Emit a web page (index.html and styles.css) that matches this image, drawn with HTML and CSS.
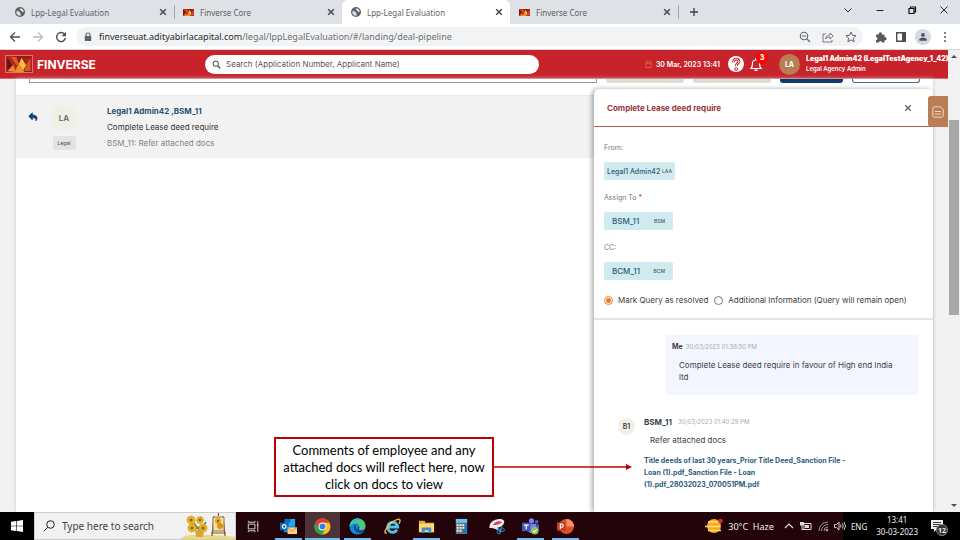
FILE: index.html
```
<!DOCTYPE html>
<html lang="en">
<head>
<meta charset="utf-8">
<title>Lpp-Legal Evaluation</title>
<link rel="stylesheet" href="styles.css">
</head>
<body>
<svg class="defs" aria-hidden="true">
  <symbol id="globe" viewBox="0 0 20 20"><circle cx="10" cy="10" r="10" fill="#5f6368"/><path d="M2.500 9C6 8 10 9 10 12.500c2 0 2 2 1 2.500v2.500C6 18 2 14.500 2.500 9zM11 2.500C9 4 9 5 11 5.500c0 2 1 2 2 2 0 2 2 3 4.500 2.500C17.500 6 15 3 11 2.500z" fill="#dee1e6"/></symbol>
  <symbol id="mosaic" viewBox="0 0 28 18"><path d="M0 0h28v18H0z" fill="#8f1b1b"/><path d="M0 0l9 0 5 9-5 9H0l6-8z" fill="#b3261c"/><path d="M9 18l5-10 6 10zM1 17l7-7 2 8z" fill="#e9902a"/><path d="M14 9l3-7 5 8-3 6z" fill="#f6c33a"/><path d="M5 1l6 0 3 8-3 1z" fill="#e2572b"/><path d="M17 2l10-1-5 9z" fill="#a8201c"/><path d="M22 10l5-8v15l-7 0z" fill="#d9531f"/><path d="M1 2l5 8-5 6z" fill="#5f1515"/></symbol>
  <symbol id="cross" viewBox="0 0 10 10"><path d="M1.500 1.500l7 7m0-7l-7 7" fill="none" stroke="currentColor" stroke-width="1.800"/></symbol>
</svg>

<nav class="tabs" aria-label="Browser tabs">
  <div class="tab"><svg class="fav"><use href="#globe"/></svg><span>Lpp-Legal Evaluation</span><button aria-label="Close tab"><svg><use href="#cross"/></svg></button></div>
  <div class="tab split"><svg class="fav wide"><use href="#mosaic"/></svg><span>Finverse Core</span><button aria-label="Close tab"><svg><use href="#cross"/></svg></button></div>
  <div class="tab active"><svg class="fav"><use href="#globe"/></svg><span>Lpp-Legal Evaluation</span><button aria-label="Close tab"><svg><use href="#cross"/></svg></button></div>
  <div class="tab"><svg class="fav wide"><use href="#mosaic"/></svg><span>Finverse Core</span><button aria-label="Close tab"><svg><use href="#cross"/></svg></button></div>
  <button class="newtab" aria-label="New tab"><svg viewBox="0 0 10 10"><path d="M5 1v8M1 5h8" stroke="#3c4043" stroke-width="1.300"/></svg></button>
  <div class="winctl">
    <button aria-label="Search tabs"><svg viewBox="0 0 10 10"><path d="M1.500 3.500L5 7l3.500-3.500" fill="none" stroke="#333"/></svg></button>
    <button aria-label="Minimize"><svg viewBox="0 0 10 10"><path d="M1.500 5.500h7" stroke="#222"/></svg></button>
    <button aria-label="Restore"><svg viewBox="0 0 10 10"><path d="M2 3.500h5v5H2zM3.500 3V2H8.500v5H7.500" fill="none" stroke="#111" stroke-width="1.200"/></svg></button>
    <button aria-label="Close"><svg viewBox="0 0 10 10"><path d="M1.500 1.500l7 7m0-7l-7 7" stroke="#333"/></svg></button>
  </div>
</nav>

<div class="toolbar">
  <div class="nav">
    <button aria-label="Back"><svg viewBox="0 0 12 12"><path d="M11 6H1.500M6 1.500L1.500 6 6 10.500" fill="none" stroke="#4a4d51" stroke-width="1.300"/></svg></button>
    <button aria-label="Forward"><svg viewBox="0 0 12 12"><path d="M1 6h9.500M6 1.500L10.500 6 6 10.500" fill="none" stroke="#b9bbbe" stroke-width="1.300"/></svg></button>
    <button aria-label="Reload"><svg viewBox="0 0 12 12"><path d="M9.800 3.500A4.500 4.500 0 1 0 10.500 7" fill="none" stroke="#4a4d51" stroke-width="1.400"/><path d="M11 .8v4.400H6.600z" fill="#4a4d51"/></svg></button>
  </div>
  <div class="address">
    <svg class="lock" viewBox="0 0 8 10"><path d="M2 4V3a2 2 0 0 1 4 0v1" fill="none" stroke="#5f6368" stroke-width="1.100"/><path d="M.8 4h6.400v5H.8z" fill="#5f6368"/></svg>
    <div class="url" role="textbox" contenteditable="true" spellcheck="false" aria-label="Address">finverseuat.adityabirlacapital.com<span>/legal/lppLegalEvaluation/#/landing/deal-pipeline</span></div>
    <button aria-label="Zoom"><svg viewBox="0 0 12 12"><path d="M8 8l3 3M3 5h4" stroke="#5f6368" stroke-width="1.200"/><circle cx="5" cy="5" r="3.700" fill="none" stroke="#5f6368" stroke-width="1.100"/></svg></button>
    <button aria-label="Share"><svg viewBox="0 0 12 12"><path d="M4 3H1v8h9V9M3.500 8C4 5 6 4 8 4V2l3.300 3.200L8 8V6C6 6 4.500 6.500 3.500 8z" fill="none" stroke="#6b6e72" stroke-width=".9"/></svg></button>
    <button aria-label="Bookmark"><svg viewBox="0 0 12 12"><path d="M6 1l1.500 3.300 3.500.4-2.600 2.400.7 3.600L6 8.900l-3.100 1.800.7-3.600L1 4.700l3.500-.4z" fill="none" stroke="#5f6368"/></svg></button>
  </div>
  <div class="ext">
    <button aria-label="Extensions"><svg viewBox="0 0 12 12"><path d="M1 3.500h2.800a1.600 1.600 0 1 1 3 0H9.500v2.700a1.600 1.600 0 1 1 0 3V11.500H7a1.500 1.500 0 0 0-3 0H1V9a1.500 1.500 0 0 0 0-3z" fill="#55585c"/></svg></button>
    <button aria-label="Side panel"><svg viewBox="0 0 12 12"><path d="M1.700 1.700h8.600v8.600H1.700z" fill="none" stroke="#4a4d51" stroke-width="1.400"/><path d="M7 2h3.500v8H7z" fill="#4a4d51"/></svg></button>
    <button class="profile" aria-label="Profile"><svg viewBox="0 0 12 12"><circle cx="6" cy="3.500" r="2.300" fill="#4c5566"/><path d="M1.500 10.500V9c0-3 9-3 9 0v1.500z" fill="#4c5566"/></svg></button>
    <button aria-label="Menu"><svg viewBox="0 0 12 12" fill="#5f6368"><circle cx="6" cy="2" r="1.100"/><circle cx="6" cy="6" r="1.100"/><circle cx="6" cy="10" r="1.100"/></svg></button>
  </div>
</div>

<div class="viewport">
  <div class="page">
    <header class="appbar">
      <a class="brand" href="#"><svg><use href="#mosaic"/></svg>FINVERSE</a>
      <label class="search"><svg viewBox="0 0 12 12"><circle cx="5" cy="5" r="3.600" fill="none" stroke="#333" stroke-width="1.300"/><path d="M7.700 7.700L11 11" stroke="#333" stroke-width="1.500"/></svg><input type="text" aria-label="Search" placeholder="Search (Application Number, Applicant Name)"></label>
      <div class="status">
        <svg class="cal" viewBox="0 0 8 9"><path d="M1 1.500h6v6.500H1zM1 3.500h6M2.500 0v2M5.500 0v2" fill="none" stroke="#d9683c"/></svg>
        <time>30 Mar, 2023 13:41</time>
        <button class="help" aria-label="Help"><svg viewBox="0 0 16 16"><circle cx="8" cy="8" r="8" fill="#fff"/><path d="M5.500 6.200C5.500 2 11 2.200 10.800 5.600 10.600 7.800 8.300 7.600 8.300 10" fill="none" stroke="#c8232b" stroke-width="2.800"/><path d="M5.500 6.200C5.500 2 11 2.200 10.800 5.600 10.600 7.800 8.300 7.600 8.300 10" fill="none" stroke="#fff" stroke-width="1"/><circle cx="8.200" cy="13" r="1.400" fill="none" stroke="#c8232b"/></svg></button>
        <button class="bell" aria-label="Notifications"><svg viewBox="0 0 12 14"><path d="M1 11.500c1.500-1.500 1.500-3 1.500-5.500C2.500 2 9.500 2 9.500 6c0 2.500 0 4 1.500 5.500z" fill="none" stroke="#fff" stroke-width="1.200"/><path d="M4.500 12.500h3V14h-3zM5.300 1h1.400v2H5.300z" fill="#fff"/></svg><b>3</b></button>
      </div>
      <div class="user"><i>LA</i><div><strong>Legal1 Admin42 (LegalTestAgency_1_42)</strong><span>Legal Agency Admin</span></div></div>
    </header>

    <main>
      <div class="filters"><input type="text" aria-label="Filter"><button class="tan" aria-label="Reset"></button><button class="tan" aria-label="Filter list"></button><button class="navy" aria-label="Apply"></button><button class="outline" aria-label="Back to list"></button></div>
      <article class="thread">
        <svg class="reply" viewBox="0 0 10 10"><path d="M4.300.8L.8 4.300l3.500 3.500V5.600c2.500 0 3.900.7 3.700 3.200 2-2.500 1.300-5.700-3.700-5.800z" fill="#0f3f73" stroke="#0f3f73" stroke-width=".8"/></svg>
        <div class="who"><i>LA</i><span>Legal</span></div>
        <div class="lines"><strong>Legal1 Admin42 ,BSM_11</strong><p>Complete Lease deed require</p><p class="muted">BSM_11: Refer attached docs</p></div>
      </article>
    </main>

    <aside class="drawer">
      <div class="drawer-head"><h2>Complete Lease deed require</h2><button aria-label="Close panel"><svg><use href="#cross"/></svg></button></div>
      <form class="fields">
        <p>From:</p><div class="chip tight">Legal1 Admin42 <small>LAA</small></div>
        <p>Assign To <em>*</em></p><div class="chip">BSM_11 <small>BSM</small></div>
        <p>CC:</p><div class="chip">BCM_11 <small>BCM</small></div>
        <div class="radios">
          <label><input type="radio" name="state" checked>Mark Query as resolved</label>
          <label><input type="radio" name="state">Additional Information (Query will remain open)</label>
        </div>
      </form>
      <div class="chat">
        <div class="mine"><div class="meta"><b>Me</b><time>30/03/2023 01:38:50 PM</time></div><p>Complete Lease deed require in favour of High end India ltd</p></div>
        <div class="theirs">
          <i>B1</i>
          <div><div class="meta"><b>BSM_11</b><time>30/03/2023 01:40:29 PM</time></div><p>Refer attached docs</p>
          <a href="#">Title deeds of last 30 years_Prior Title Deed_Sanction File - Loan (1).pdf_Sanction File - Loan (1).pdf_28032023_070051PM.pdf</a></div>
        </div>
      </div>
    </aside>
    <button class="notes" aria-label="Notes"><svg viewBox="0 0 12 12"><path d="M2.500.8H8.500L11.200 3.500v6A1.700 1.700 0 0 1 9.500 11.200h-7A1.700 1.700 0 0 1 .8 9.500v-7A1.700 1.700 0 0 1 2.500.8zM3 5.500h6M3 8h6" fill="none" stroke="#f3dccb"/></svg></button>
    <div class="callout"><p>Comments of employee and any attached docs will reflect here, now click on docs to view</p><svg viewBox="0 0 138 8"><path d="M0 4h134" stroke="#c00000" stroke-width="1.500"/><path d="M132 1l6 3-6 3z" fill="#c00000"/></svg></div>
  </div>
  <div class="scroll"><svg viewBox="0 0 8 5"><path d="M1 4h6L4 1z" fill="#505050"/></svg><span></span><svg viewBox="0 0 8 5"><path d="M1 1h6L4 4z" fill="#505050"/></svg></div>
</div>

<footer class="taskbar">
  <button class="start" aria-label="Start"><svg viewBox="0 0 12 12" fill="#fff"><path d="M0 1.700l5.200-.7v4.700H0zM5.800.9L12 0v5.700H5.800zM0 6.300h5.200V11L0 10.300zM5.800 6.300H12V12l-6.200-.9z"/></svg></button>
  <label class="find"><svg class="lens" viewBox="0 0 12 12"><circle cx="7.500" cy="4.500" r="3.800" fill="none" stroke="#222"/><path d="M4.800 7.200L.8 11.200" stroke="#222"/></svg><input type="text" aria-label="Search Windows" placeholder="Type here to search">
    <svg class="flowers" viewBox="0 0 54 26"><path d="M0 26c3-5 10-4 18-4s20 0 36 2v2z" fill="#f0d878"/><path d="M13 10l6 8 6-9M19 14l-8 3" stroke="#668a35" stroke-width="1.500" fill="none"/><path d="M14 17h9l-1 7h-7z" fill="#d8a63e"/><g fill="#e9b222" stroke="#c98a16" stroke-dasharray="1 1"><circle cx="10" cy="7" r="4"/><circle cx="19" cy="7" r="3.500"/><circle cx="11" cy="15" r="4"/><circle cx="22" cy="15" r="4"/></g><g fill="#8b6018"><circle cx="10" cy="7" r="1.500"/><circle cx="19" cy="7" r="1.300"/><circle cx="11" cy="15" r="1.500"/><circle cx="22" cy="15" r="1.500"/></g><path d="M31 23l2-20M44 23L42 3M30 20h15M37.500 0v3" stroke="#7a5430" stroke-width="1.200"/><path d="M32 4h11v14H32z" fill="#efe2a5" stroke="#9a7440"/><circle cx="37" cy="8" r="3" fill="#e5a51d"/><circle cx="39" cy="13" r="3" fill="#d89214"/><circle cx="37" cy="8" r="1" fill="#7a5015"/></svg></label>
  <div class="apps">
    <button aria-label="Task view"><svg viewBox="0 0 18 18" fill="none" stroke="#ddd"><path d="M3.500 6.500h7v5h-7zM3.500 3v1.500h7V3M3.500 15v-1.500h7V15M13.500 3.500v11M12.500 7.500h2"/></svg></button>
    <button class="on" aria-label="Outlook"><svg viewBox="0 0 18 18"><path d="M5 1h11v9H5z" fill="#28a8ea"/><path d="M5 1h6v4H5z" fill="#0f6bbd"/><path d="M4 9l12-1v7H4z" fill="#1490df"/><path d="M0 5h9v8H0z" fill="#0a64b8"/><circle cx="4.500" cy="9" r="2" fill="none" stroke="#fff" stroke-width="1.200"/><path d="M8 10h10v7H8z" fill="#f7d08c"/><path d="M8 10l5 4 5-4" fill="none" stroke="#c98b46"/></svg></button>
    <button class="on current" aria-label="Chrome"><svg viewBox="0 0 18 18"><circle cx="9" cy="9" r="8.500" fill="#fbc116"/><path d="M9 9L1.600 4.800A8.500 8.500 0 0 0 8 17.400z" fill="#2ba24c"/><path d="M9 9L12.500 11 8.500 17.500 8 17.400 1.700 5l4 5z" fill="#2ba24c"/><path d="M1.600 4.800A8.500 8.500 0 0 1 16.400 5H9L5.300 11z" fill="#e33b2e"/><circle cx="9" cy="9" r="4.200" fill="#fff"/><circle cx="9" cy="9" r="3.200" fill="#397de9"/></svg></button>
    <button class="on" aria-label="Edge"><svg viewBox="0 0 18 18"><circle cx="9" cy="9" r="8.500" fill="#1587d5"/><path d="M.6 9C1 3 5 .5 9 .5c5 0 8.500 3.500 8.500 7.500 0 3-2 4.500-4.500 4.500-2 0-3-1-2-2.500C12 6 6 3.500.6 9z" fill="#4bcb78"/><path d="M.6 9C1 3 5 .5 9 .5c2 0 4 .6 5 2C8 1 3 4 .6 9z" fill="#28b8db"/><path d="M7 7c-4 3-1 9 4 9 2.500 0 4-1 5.500-2.500-4 2-9.500-.5-9.500-6.500z" fill="#0c4ca0"/><path d="M11 10c-2 2 0 4 3 3.500 2 0 3-1 3.500-1.500l-.5 1.500c-4 2-9 0-7-4z" fill="#22040a"/></svg></button>
    <button aria-label="Internet Explorer"><svg viewBox="0 0 18 18" fill="none"><path d="M13.800 12.500a5.300 5.300 0 1 1 .7-3H4.500" stroke="#4fc3f2" stroke-width="3"/><path d="M3 16c-5 1 0-7 5-11s9-5 9-2c0 1-.5 2-1 3" stroke="#f2c744" stroke-width="1.400"/></svg></button>
    <button class="on" aria-label="File Explorer"><svg viewBox="0 0 18 18"><path d="M1 3h6l1 2h9v10H1z" fill="#e5aa35"/><path d="M1 6h16v9H1z" fill="#ffd96d"/><path d="M4 10h10v6h-3v-3H7v3H4z" fill="#3c8fdc"/></svg></button>
    <button aria-label="Calculator"><svg viewBox="0 0 18 18"><path d="M3 1h12v16H3z" fill="#6a7681"/><path d="M3 1h12v4H3z" fill="#5fc8f5"/><path d="M4 6.500h2v2H4zm3 0h2v2H7zm3 0h2v2h-2zM4 9.500h2v2H4zm3 0h2v2H7zm3 0h2v2h-2zM4 12.500h2v2H4zm3 0h2v2H7z" fill="#eef2f5"/><path d="M12.500 6h2v10h-4v-4h2z" fill="#1677c0"/></svg></button>
    <button aria-label="Snipping Tool"><svg viewBox="0 0 18 18"><ellipse cx="9.500" cy="6" rx="8" ry="4.500" fill="#eee" transform="rotate(-20 9.500 6)"/><path d="M5 7.500c2-4 7-5 10-3.500-2 3-6 3.500-10 3.500z" fill="#d64352"/><path d="M1.500 10c3-2 5 0 9 2" stroke="#e7e7e7" stroke-width="1.800" fill="none"/><path d="M10 10l4 5M15 9l-3 6" stroke="#3c8fc3" stroke-width="1.300"/><circle cx="11.500" cy="15" r="1.800" fill="none" stroke="#2e93d0"/><circle cx="15.500" cy="12.500" r="1.800" fill="none" stroke="#2e93d0"/></svg></button>
    <button class="on" aria-label="Teams"><svg viewBox="0 0 18 18"><circle cx="10" cy="3" r="2.800" fill="#7b83eb"/><circle cx="15.500" cy="4" r="2" fill="#5059c9"/><path d="M6 6h9v7c-1 4-8 4-9 0z" fill="#7b83eb"/><path d="M15 7h3v5c0 2-2 2-3 2z" fill="#5059c9"/><path d="M0 5h9v9H0z" fill="#4b53bc"/><path d="M2 7.500h5M4.500 7.500V12" stroke="#fff" stroke-width="1.300"/><circle cx="13.500" cy="13.500" r="4" fill="#92c353"/><path d="M11.500 13.500l1.500 1.500 2.500-3" fill="none" stroke="#fff" stroke-width="1.200"/></svg></button>
    <button class="on" aria-label="PowerPoint"><svg viewBox="0 0 18 18"><circle cx="10" cy="9" r="8" fill="#e0502d"/><path d="M10 1a8 8 0 0 1 8 8h-8z" fill="#ff8f6b"/><path d="M0 4.500h9v9H0z" fill="#c43e1c"/><path d="M3.500 12V6.500H5a1.600 1.600 0 0 1 0 3.300H3.500" fill="none" stroke="#fff" stroke-width="1.200"/></svg></button>
  </div>
  <div class="tray">
    <svg class="sun" viewBox="0 0 18 16"><circle cx="9" cy="8" r="7" fill="#f7a81b"/><path d="M3 4h12M0 8.500h15M3 12.500h13" stroke="#ffdf80" stroke-width="1.500"/><circle cx="15.500" cy="3" r="2.300" fill="#d92b2b"/></svg>
    <span class="temp">30°C&nbsp; Haze</span>
    <svg viewBox="0 0 12 12"><path d="M2 8l4-4 4 4" fill="none" stroke="#ddd" stroke-width="1.200"/></svg>
    <svg viewBox="0 0 12 12"><path d="M4 3.500h7v6H4z" fill="none" stroke="#ddd"/><path d="M5 5h4v3H5zM0 2h4v3.500H0zM1.500 5h1v4h3v1h-4z" fill="#ddd"/></svg>
    <svg viewBox="0 0 12 12" fill="none" stroke="#999"><path d="M2 11A9 9 0 0 1 11 2M4.500 11A6.500 6.500 0 0 1 11 4.500M7 11A4 4 0 0 1 11 7"/><circle cx="10" cy="10" r="1" fill="#ddd"/></svg>
    <svg viewBox="0 0 12 12" fill="none" stroke="#ccc"><path d="M.5 4.500h2L5 2v8L2.500 7.500h-2zM6.500 4.500q1 1.500 0 3M8.300 3.300q2 2.700 0 5.400M10 2q3 4 0 8"/></svg>
    <span class="lang">ENG</span>
    <time>13:41<br>30-03-2023</time>
    <button aria-label="12 notifications"><svg viewBox="0 0 12 12"><path d="M0 0h12v9H6l-3 3V9H0z" fill="#eee"/><path d="M2 2.500h8M2 4.500h8M2 6.500h5" stroke="#222" stroke-width=".9"/></svg><b>12</b></button>
  </div>
</footer>
</body>
</html>
```
FILE: styles.css
```
* { box-sizing: border-box; }
html, body { height: 100%; margin: 0; }
body {
  display: flex;
  flex-direction: column;
  overflow: hidden;
  font-family: "Noto Sans", "Open Sans", sans-serif;
  font-size: 8px;
  background: #fff;
  color: #3c4043;
}
button { border: 0; padding: 0; background: none; font: inherit; color: inherit; display: grid; place-items: center; }
input { font: inherit; color: inherit; }
p, h2 { margin: 0; }
i { font-style: normal; }
a { text-decoration: none; color: inherit; }
svg { display: block; flex: none; }
.defs { position: absolute; width: 0; height: 0; }

/* Browser chrome */
.tabs { display: flex; flex: 0 0 24px; background: #dee1e6; padding-left: 6px; }
.tab { flex: 0 1 168px; display: flex; align-items: center; gap: 6px; padding: 0 7px 0 9px; color: #5f6368; border-radius: 6px 6px 0 0; }
.tab span { flex: 1; white-space: nowrap; }
.tab .fav { width: 10px; height: 10px; }
.tab .fav.wide { width: 11px; height: 7px; }
.tab button svg { width: 8px; height: 8px; color: #44474a; }
.tab.active { background: #fff; }
.split { background: linear-gradient(#a5a8ad, #a5a8ad) left center / 1px 14px no-repeat; }
.newtab { width: 31px; background: linear-gradient(#a5a8ad, #a5a8ad) left center / 1px 14px no-repeat; }
.newtab svg { width: 10px; height: 10px; }
.winctl { margin-left: auto; display: flex; height: 20px; }
.winctl button { width: 32px; }
.winctl svg { width: 10px; height: 10px; }

.toolbar { flex: 0 0 26px; display: flex; align-items: center; border-bottom: 1px solid #d5d7da; }
.nav { display: flex; gap: 11px; padding: 0 9px; }
.toolbar svg { width: 12px; height: 12px; }
.address { flex: 1; height: 19px; display: flex; align-items: center; gap: 11px; padding: 0 6px 0 8px; background: #f1f3f4; border-radius: 10px; }
.address .lock { width: 8px; height: 10px; margin-right: -8px; }
.url { flex: 1; font-size: 9px; line-height: 14px; white-space: nowrap; color: #27292c; padding-left: 4px; outline: 0; }
.url span { color: #6c7075; }
.ext { display: flex; align-items: center; gap: 8px; padding: 0 9px 0 12px; }
.profile { width: 16px; height: 16px; border-radius: 50%; background: #d4d9e2; }
.ext .profile svg { width: 10px; height: 10px; }

/* Application page */
.viewport { flex: 1; min-height: 0; display: flex; }
.page { flex: 1; min-width: 0; position: relative; background: #f2f2f2; overflow: hidden; font-family: Inter, Roboto, sans-serif; display: flex; flex-direction: column; }
.appbar { flex: 0 0 29px; display: flex; align-items: center; background: #c8232b; color: #fff; padding-left: 5px; border-bottom: 1px solid #d86a6e; }
.brand { flex: 0 0 200px; display: flex; align-items: center; gap: 4px; font-size: 12px; font-weight: 700; }
.brand svg { width: 28px; height: 18px; border: 1px solid #d9776c; }
.search { flex: 0 1 334px; height: 19px; display: flex; align-items: center; gap: 5px; padding: 0 7px; border-radius: 10px; background: #fff; color: #555; }
.search svg { width: 9px; height: 9px; }
.search input { flex: 1; min-width: 0; border: 0; padding: 0; outline: 0; background: none; }
input::placeholder { color: #555; opacity: 1; }
.status { margin-left: auto; display: flex; align-items: center; font-size: 7px; font-weight: 600; }
.status .cal { width: 7px; height: 9px; margin-right: 4px; }
.help { margin: 0 6px 0 8px; }
.help svg { width: 16px; height: 16px; }
.bell { position: relative; }
.bell svg { width: 12px; height: 14px; }
.bell b { position: absolute; left: 6px; top: -5px; width: 12px; height: 12px; line-height: 12px; border-radius: 50%; background: #f00; font-size: 7px; text-align: center; }
.user { flex: 0 0 169px; margin-left: 17px; display: flex; align-items: center; gap: 6px; min-width: 0; overflow: hidden; }
.user i { flex: none; width: 21px; height: 21px; line-height: 21px; border-radius: 50%; background: #b97d55; text-align: center; font-size: 7px; font-weight: 700; }
.user div { display: flex; flex-direction: column; white-space: nowrap; line-height: 10px; font-weight: 700; font-size: 7px; min-width: 0; overflow: hidden; }
.user div span { font-size: 6px; font-weight: 600; }

main { flex: 1; margin: 0 15px 0 16px; background: #fff; box-shadow: 0 0 4px #ccc; }
.filters { height: 16px; display: flex; align-items: flex-start; gap: 9px; padding: 0 13px; }
.filters > * { height: 4px; }
.filters input { flex: 1; min-width: 0; padding: 0; border: 1px solid #999; border-top: 0; background: #fff; }
.filters .tan { width: 78px; background: #dedcd3; border-radius: 0 0 3px 3px; }
.filters .navy { width: 63px; background: #0c3b70; border-radius: 0 0 3px 3px; }
.filters .outline { width: 68px; border: 1px solid #4b6a90; border-top: 0; border-radius: 0 0 3px 3px; }
.thread { height: 63px; display: flex; background: #f2f2f2; border-top: 1px solid #e8e8e8; padding: 9px 12px; }
.reply { width: 10px; height: 10px; margin: 7px 13px 0 0; }
.who { width: 26px; display: flex; flex-direction: column; align-items: center; gap: 5px; }
.who i { width: 26px; height: 26px; line-height: 26px; border-radius: 50%; background: #efefe6; text-align: center; font-weight: 600; color: #5c6770; }
.who span { width: 23px; height: 14px; line-height: 14px; text-align: center; border-radius: 2px; background: #e3e3e3; font-size: 5px; color: #444; }
.lines { padding-left: 30px; line-height: 16px; color: #333; margin-top: -2px; }
.lines strong { display: block; font-weight: 700; color: #2b4f70; }
.lines .muted { color: #858585; }

/* Query drawer over the thread list */
.drawer { position: absolute; top: 39px; bottom: 0; right: 15px; width: 339px; background: #fff; border-radius: 5px 5px 0 0; box-shadow: -2px 0 5px #0005; overflow: hidden; }
.drawer-head { height: 38px; display: flex; align-items: center; justify-content: space-between; padding: 0 21px 0 13px; border-bottom: 1px solid #b75f57; color: #9b3438; }
.drawer-head h2 { font-size: 8px; font-weight: 700; }
.drawer-head svg { width: 8px; height: 8px; color: #666; }
.fields { padding: 15px 10px 10px; border-bottom: 2px solid #e3e3e3; }
.fields p { font-size: 7px; line-height: 12px; margin-bottom: 8px; color: #777; }
.fields em { color: #d22; font-style: normal; }
.chip { width: 69px; height: 18px; margin-bottom: 12px; padding: 0 8px; display: flex; align-items: center; justify-content: space-between; background: #d0ebf0; border-radius: 2px; font-size: 8px; font-weight: 500; color: #2b5c7a; white-space: nowrap; }
.chip.tight { width: 71px; padding: 0 3px; font-size: 7px; }
.chip small { font-size: 5px; color: #555; }
.radios { display: flex; gap: 6px; height: 16px; align-items: center; white-space: nowrap; }
.radios label { display: flex; align-items: center; gap: 5px; }
.radios input { appearance: none; width: 9px; height: 9px; margin: 0; border: 1px solid #777; border-radius: 50%; background: #fff; }
.radios input:checked { border-color: #ee7b22; background: radial-gradient(circle, #ee7b22 0 2px, #fff 3px); }
.chat { padding: 15px 15px 0; line-height: 12px; }
.mine { margin-left: 57px; padding: 6px 6px 12px; background: #f3f6ff; border-radius: 2px; }
.meta { display: flex; gap: 3px; font-size: 7px; line-height: 12px; }
.meta time { font-size: 6px; color: #aaa; }
.mine p { padding: 6px 16px 0 7px; }
.theirs { display: flex; gap: 9px; margin: 21px 0 0 9px; }
.theirs .meta { gap: 6px; }
.theirs .meta b { font-size: 8px; }
.theirs i { flex: none; width: 17px; height: 17px; line-height: 17px; margin-top: 2px; border-radius: 50%; background: #efefe6; font-size: 7px; font-weight: 600; text-align: center; }
.theirs p { padding: 6px; }
.theirs a { display: block; width: 212px; margin-top: 3px; font-size: 7px; font-weight: 700; color: #2b5c7e; }
.notes { position: absolute; right: 0; top: 46px; width: 20px; height: 31px; background: #b97d55; border-radius: 3px 0 0 3px; }
.notes svg { width: 12px; height: 12px; }
.callout { position: absolute; left: 274px; top: 387px; display: flex; align-items: center; }
.callout p { width: 220px; height: 60px; padding: 3px 5px; border: 2px solid #c00000; background: #fff; color: #000; font: 13px/17px Lato, sans-serif; text-align: center; }
.callout svg { width: 138px; height: 8px; }
.scroll { flex: 0 0 12px; background: #f1f1f1; display: flex; flex-direction: column; align-items: center; padding: 4px 0; }
.scroll svg { width: 8px; height: 5px; }
.scroll span { width: 10px; height: 43%; margin: 61px 0 auto; background: #a8a8a8; }

/* Windows taskbar */
.taskbar { flex: 0 0 28px; display: flex; background: #22040a; color: #eee; }
.start { width: 34px; background: #000; }
.start svg { width: 12px; height: 12px; }
.find { width: 202px; display: flex; align-items: center; background: #f1f1f1; border: 1px solid #ccc; padding-left: 8px; font-size: 10px; }
.find .lens { width: 12px; height: 12px; }
.find input { flex: 1; min-width: 0; margin-left: 7px; padding: 0; border: 0; background: none; outline: 0; }
.find input::placeholder { color: #444; }
.find .flowers { width: 54px; height: 26px; }
.apps { display: grid; grid-template-columns: repeat(10, 1fr); width: 347px; }
.apps button { padding-top: 2px; border-bottom: 2px solid transparent; }
.apps svg { width: 17px; height: 17px; }
.apps .on { background: linear-gradient(#76b9ed, #76b9ed) center bottom / 27px 2px no-repeat border-box; }
.apps .current { background: linear-gradient(#76b9ed, #76b9ed) bottom / 100% 2px no-repeat border-box, #4b3338; }
.tray { margin-left: auto; display: flex; align-items: center; gap: 5px; padding-right: 17px; background: linear-gradient(90deg, transparent 138px, #000 138px); }
.tray svg { width: 12px; height: 12px; }
.tray .sun { width: 18px; height: 16px; }
.temp { font-size: 9px; margin-right: 4px; white-space: nowrap; }
.lang { font-size: 8px; }
.tray time { font-size: 8px; line-height: 12px; text-align: center; margin: 0 8px 0 4px; }
.tray button { position: relative; }
.tray button b { position: absolute; left: 5px; top: 4px; width: 12px; height: 12px; line-height: 11px; border-radius: 50%; border: 1px solid #888; background: #333; font-size: 7px; }
```
